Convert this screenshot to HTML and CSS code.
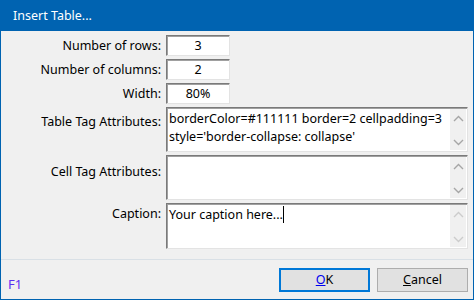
FILE: index.html
```html
<!DOCTYPE html>
<html lang="en">
<head>
    <meta charset="UTF-8">
    <title>Insert Table...</title>
    <link rel="stylesheet" href="styles.css">
</head>
<body>
    <div class="window">
        <div class="titlebar">Insert Table...</div>

        <div class="form">
            <label class="lbl">Number of rows:</label>
            <div class="field"><div class="edit">3</div></div>

            <label class="lbl">Number of columns:</label>
            <div class="field"><div class="edit">2</div></div>

            <label class="lbl">Width:</label>
            <div class="field"><div class="edit">80%</div></div>

            <label class="lbl lbl-tall">Table Tag Attributes:</label>
            <div class="memo">
                <div class="memo-text">borderColor=#111111 border=2 cellpadding=3<br>style='border-collapse: collapse'</div>
                <div class="scroll">
                    <svg width="11" height="7" viewBox="0 0 11 7"><path d="M1 6 L5.5 1.5 L10 6" fill="none" stroke="#a6a6a6" stroke-width="1.4"/></svg>
                    <svg width="11" height="7" viewBox="0 0 11 7"><path d="M1 1 L5.5 5.5 L10 1" fill="none" stroke="#a6a6a6" stroke-width="1.4"/></svg>
                </div>
            </div>

            <label class="lbl lbl-tall2">Cell Tag Attributes:</label>
            <div class="memo">
                <div class="memo-text"></div>
                <div class="scroll">
                    <svg width="11" height="7" viewBox="0 0 11 7"><path d="M1 6 L5.5 1.5 L10 6" fill="none" stroke="#a6a6a6" stroke-width="1.4"/></svg>
                    <svg width="11" height="7" viewBox="0 0 11 7"><path d="M1 1 L5.5 5.5 L10 1" fill="none" stroke="#a6a6a6" stroke-width="1.4"/></svg>
                </div>
            </div>

            <label class="lbl lbl-cap">Caption:</label>
            <div class="memo memo-cap">
                <div class="memo-text">Your caption here...<span class="caret"></span></div>
                <div class="scroll">
                    <svg width="11" height="7" viewBox="0 0 11 7"><path d="M1 6 L5.5 1.5 L10 6" fill="none" stroke="#cccccc" stroke-width="1.4"/></svg>
                    <svg width="11" height="7" viewBox="0 0 11 7"><path d="M1 1 L5.5 5.5 L10 1" fill="none" stroke="#cccccc" stroke-width="1.4"/></svg>
                </div>
            </div>
        </div>

        <div class="footer">
            <span class="help">F1</span>
            <div class="buttons">
                <button class="btn btn-default"><u>O</u>K</button>
                <button class="btn"><u>C</u>ancel</button>
            </div>
        </div>
    </div>
</body>
</html>
```

FILE: styles.css
```css
* {
    box-sizing: border-box;
}

body {
    margin: 0;
    background: #f0f0f0;
    font-family: "Noto Sans", sans-serif;
    font-size: 12.5px;
    color: #000;
}

.window {
    width: 474px;
    height: 300px;
    border: 1px solid #0063b1;
    border-top: none;
    display: flex;
    flex-direction: column;
}

.titlebar {
    height: 31px;
    margin: 0 -1px;
    background: #0063b1;
    color: #fff;
    padding-left: 13px;
    line-height: 31px;
    font-size: 12.5px;
}

.form {
    display: grid;
    grid-template-columns: 160px 1fr;
    align-content: start;
    column-gap: 5px;
    row-gap: 3px;
    padding: 4px 5px 0 0;
    height: 229px;
    border-bottom: 1px solid #d9e0e6;
}

.lbl {
    text-align: right;
    line-height: 21px;
}

.lbl-tall {
    padding-top: 4px;
}

.lbl-tall2 {
    padding-top: 6px;
}

.lbl-cap {
    padding-top: 0;
}

.edit {
    width: 64px;
    height: 21px;
    background: #fff;
    border-style: solid;
    border-width: 1px;
    border-color: #7a7a7a #e3e3e3 #e3e3e3 #7a7a7a;
    box-shadow: inset 1px 1px 0 #a0a0a0;
    text-align: center;
    line-height: 19px;
}

.memo {
    height: 45px;
    display: flex;
    background: #fff;
    border-style: solid;
    border-width: 1px;
    border-color: #7a7a7a #e3e3e3 #e3e3e3 #7a7a7a;
    box-shadow: inset 1px 1px 0 #a0a0a0;
}

.memo-cap {
    height: 46px;
}

.memo-text {
    flex: 1;
    padding: 2px 0 0 2px;
    line-height: 18px;
    white-space: nowrap;
}

.caret {
    display: inline-block;
    width: 1px;
    height: 17px;
    background: #000;
    vertical-align: -4px;
}

.scroll {
    width: 16px;
    margin: 1px 1px 1px 0;
    background: #f0f0f0;
    display: flex;
    flex-direction: column;
    justify-content: space-between;
    align-items: center;
    padding: 6px 0 4px;
}

.footer {
    flex: 1;
    display: flex;
    align-items: center;
    justify-content: space-between;
    padding: 0 5px 0 7px;
}

.help {
    align-self: flex-end;
    color: #5a2ff0;
    font-size: 13px;
    line-height: 16px;
    padding-bottom: 7px;
}

.buttons {
    display: flex;
    gap: 7px;
}

.btn {
    width: 91px;
    height: 24px;
    background: #e1e1e1;
    border: 1px solid #adadad;
    font-family: "Noto Sans", sans-serif;
    font-size: 12.5px;
    color: #000;
    padding: 0;
}

.btn-default {
    border: 2px solid #0078d7;
}

.btn-default u {
    color: #0000ee;
}
```
